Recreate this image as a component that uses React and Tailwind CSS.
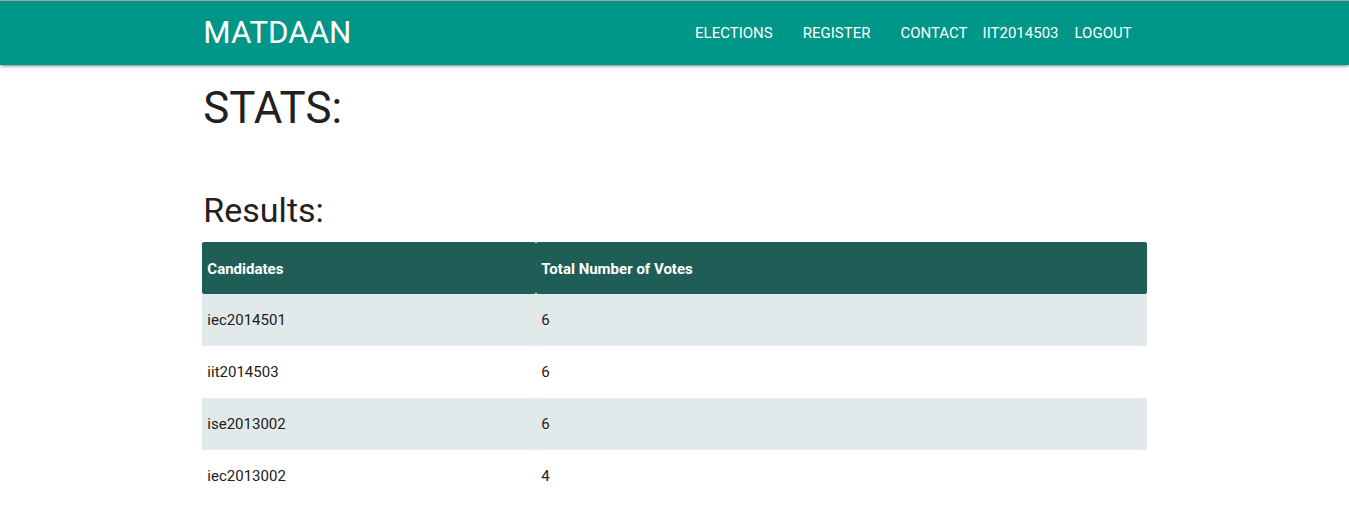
import React from 'react';

const results = [
  { name: 'iec2014501', votes: 6 },
  { name: 'iit2014503', votes: 6 },
  { name: 'ise2013002', votes: 6 },
  { name: 'iec2013002', votes: 4 },
];

const App = () => {
  return (
    <div className="min-h-screen bg-white text-[#212121] font-['Roboto',sans-serif] text-[15px]">
      {/* === NAVBAR === */}
      <nav className="h-[65px] border-t border-[#a3a3a3] bg-[#009688] shadow-[0_2px_2px_0_rgba(0,0,0,0.14),0_3px_1px_-2px_rgba(0,0,0,0.12),0_1px_5px_0_rgba(0,0,0,0.2)] relative z-10">
        <div className="w-[70%] mx-auto h-full flex items-center justify-between text-white">
          <a className="text-[31.3px] leading-[64px] pl-px">MATDAAN</a>
          <ul className="flex items-center leading-[64px] text-[15px]">
            <li className="px-[15px]">ELECTIONS</li>
            <li className="px-[15px]">REGISTER</li>
            <li className="pl-[15px]">CONTACT</li>
            <li className="pl-[15px]">IIT2014503</li>
            <li className="pl-[16px] pr-[15px]">LOGOUT</li>
          </ul>
        </div>
      </nav>

      {/* === CONTENT === */}
      <div className="w-[70%] mx-auto">
        <h3 className="text-[43.8px] leading-[48.2px] mt-[19px] pl-px">STATS:</h3>
        <h4 className="text-[34px] leading-[37.6px] mt-[60px] mb-[12px] pl-px">Results:</h4>

        <table className="w-full border-separate border-spacing-0 text-left">
          <thead>
            <tr>
              <th className="w-[334px] h-[52px] px-[5px] pt-[2px] bg-[#1f5e56] text-white font-bold rounded-[2px] text-[15px]">Candidates</th>
              <th className="h-[52px] px-[5px] pt-[2px] bg-[#1f5e56] text-white font-bold rounded-[2px] text-[15px]">Total Number of Votes</th>
            </tr>
          </thead>
          <tbody>
            {results.map((r, i) => (
              <tr key={r.name}>
                <td className={`h-[52px] px-[5px] pt-px rounded-[2px] leading-[22.5px] ${i % 2 === 0 ? 'bg-[#e1e9ea]' : 'bg-white'}`}>{r.name}</td>
                <td className={`h-[52px] px-[5px] pt-px rounded-[2px] leading-[22.5px] ${i % 2 === 0 ? 'bg-[#e1e9ea]' : 'bg-white'}`}>{r.votes}</td>
              </tr>
            ))}
          </tbody>
        </table>
      </div>
    </div>
  );
};

export default App;
